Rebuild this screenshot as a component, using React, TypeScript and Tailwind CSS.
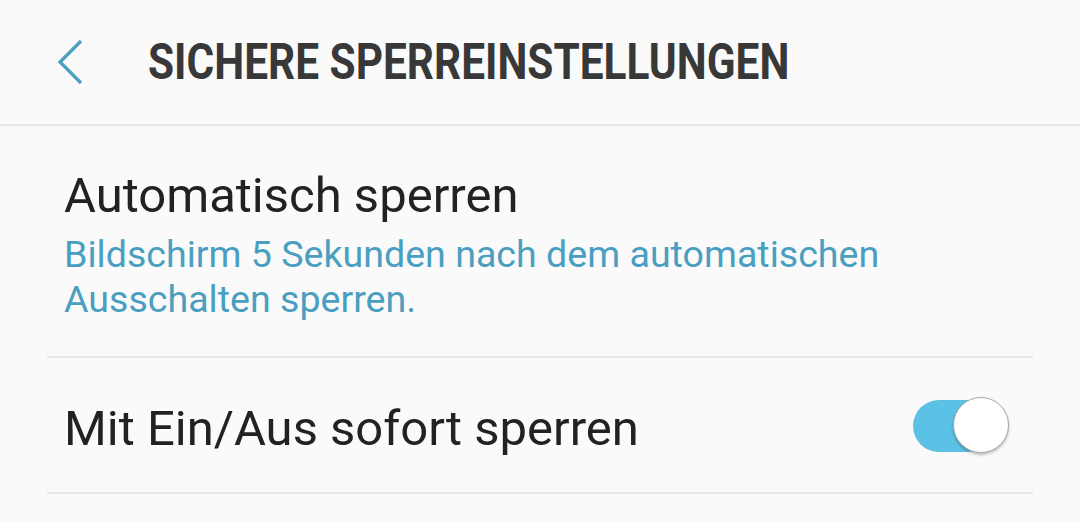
import { useState } from 'react';

function BackIcon() {
  return (
    <svg width="30" height="46" viewBox="0 0 30 46" className="shrink-0">
      <path d="M25 2 L4 23 L25 44" fill="none" stroke="#4a9fc1" strokeWidth="3.2" />
    </svg>
  );
}

function Toggle({ on, onChange }: { on: boolean; onChange: () => void }) {
  return (
    <button onClick={onChange} className="relative h-[56px] w-[100px] shrink-0">
      <span className={`absolute left-[2px] top-[3px] h-[52px] w-[80px] rounded-full ${on ? 'bg-[#5bc2e6]' : 'bg-[#cfcfcf]'}`} />
      <span
        className={`absolute top-0 h-[56px] w-[56px] rounded-full border-[1.5px] border-[#a8a8a8] bg-white shadow-[0_2px_3px_rgba(0,0,0,0.25)] ${on ? 'left-[42px]' : 'left-0'}`}
      />
    </button>
  );
}

export default function App() {
  const [instantLock, setInstantLock] = useState(true);

  return (
    <div className="h-[522px] w-[1080px] overflow-hidden bg-[#fafafa] font-['Roboto',sans-serif]">
      <header className="flex h-[126px] items-center border-b-2 border-[#e6e6e6] pl-[56px]">
        <BackIcon />
        <h1 className="ml-[62px] origin-left scale-x-[0.848] whitespace-nowrap text-[50px] font-bold leading-none text-[#383838]">
          SICHERE SPERREINSTELLUNGEN
        </h1>
      </header>

      <div className="mx-[47px] border-b-2 border-[#e8e8e8] pb-[34px] pl-[17px] pt-[42px]">
        <div className="text-[49px] leading-[56px] text-[#222]">Automatisch sperren</div>
        <div className="mt-[8px] text-[37.6px] leading-[45px] text-[#4a9fc1]">
          Bildschirm 5 Sekunden nach dem automatischen
          <br />
          Ausschalten sperren.
        </div>
      </div>

      <div className="mx-[47px] flex h-[136px] items-center justify-between border-b-2 border-[#e8e8e8] pl-[17px] pr-[22px]">
        <span className="mt-[8px] text-[49px] leading-[56px] text-[#222]">Mit Ein/Aus sofort sperren</span>
        <Toggle on={instantLock} onChange={() => setInstantLock(!instantLock)} />
      </div>
    </div>
  );
}
